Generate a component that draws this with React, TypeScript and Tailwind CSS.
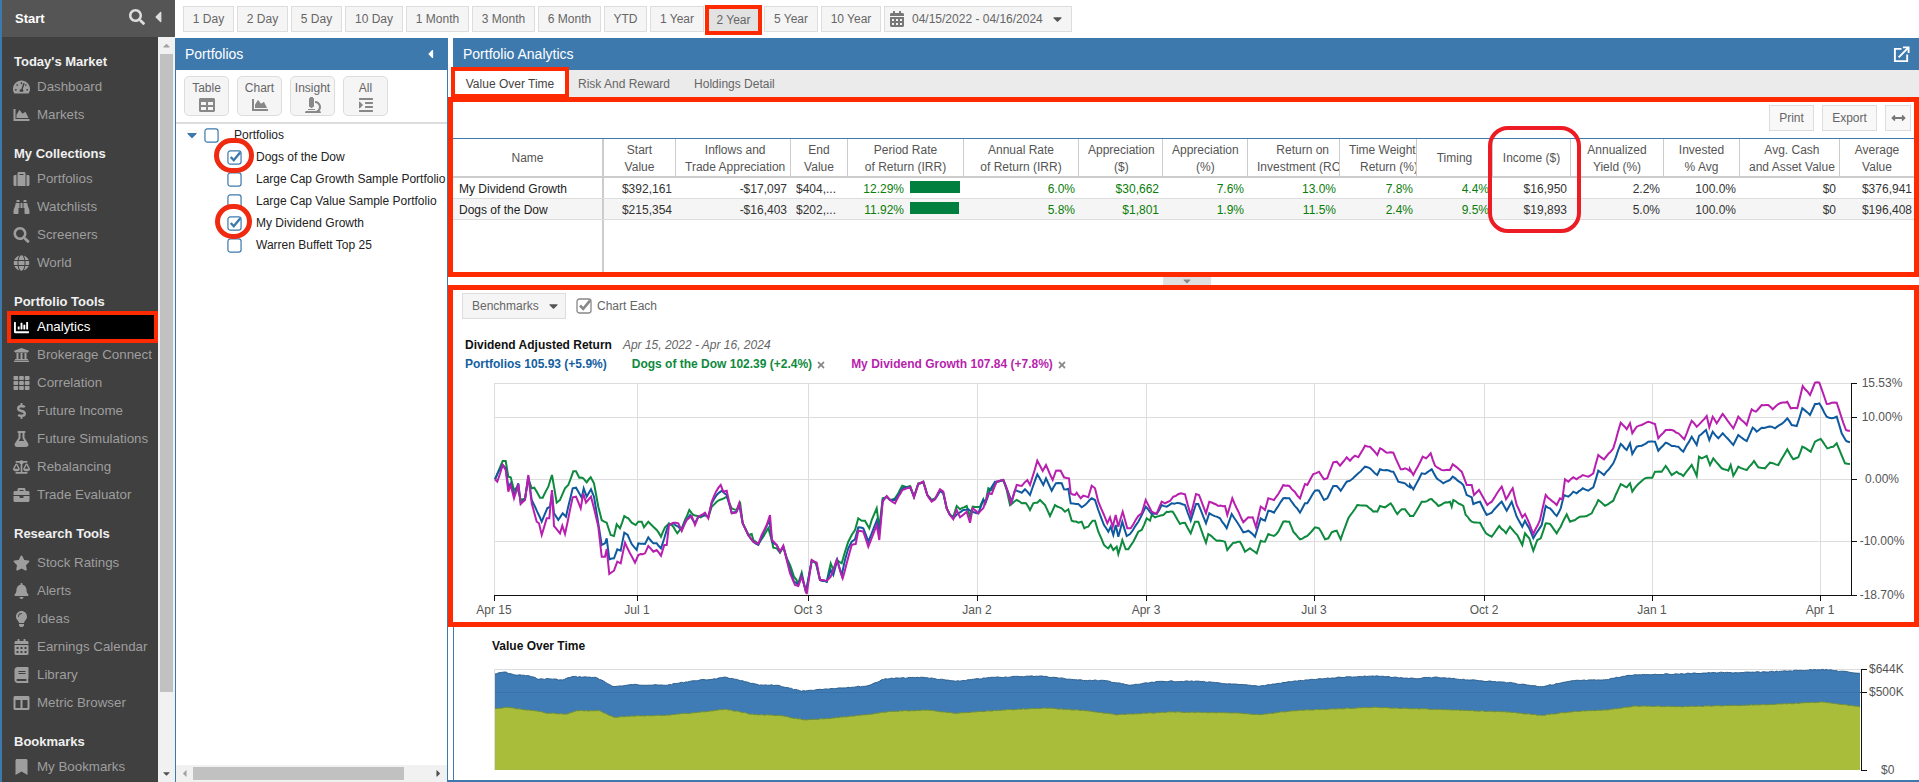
import React from "react";
import {
  FaTachometerAlt, FaChartArea, FaSuitcase, FaBinoculars, FaSearch, FaGlobe, FaChartBar, FaUniversity, FaTh,
  FaDollarSign, FaFlask, FaBalanceScale, FaBriefcase, FaStar, FaBell, FaLightbulb, FaCalendarAlt, FaBook, FaColumns,
  FaBookmark, FaTable, FaMicroscope, FaIndent, FaCaretDown, FaCaretLeft, FaCaretUp, FaCaretRight, FaTimes, FaArrowsAltH,
} from "react-icons/fa";

const BLUE = "#3e79ad";

/* ---------- traced chart data: crop coordinates, 3x ---------- */
const G1 = "15,238 25,215 38,183 47,183 55,230 62,232 72,270 82,262 92,300 105,295 115,235 125,265 133,263 150,293 158,293 175,260 186,225 200,308 210,300 225,265 235,255 250,214 258,214 268,233 280,235 290,247 302,232 312,250 325,320 335,360 350,368 362,405 372,408 380,373 390,385 403,348 415,355 425,368 437,375 445,365 455,365 462,382 475,365 490,380 500,390 513,410 525,382 537,370 550,380 562,400 575,385 585,360 598,330 610,345 622,348 632,352 645,345 655,352 665,320 680,305 695,298 710,290 725,325 740,330 750,305 758,370 775,405 785,402 790,420 805,432 820,410 835,385 845,420 850,443 860,445 870,458 880,440 890,475 900,495 912,530 925,550 935,518 948,578 965,482 978,490 990,540 1010,545 1022,490 1030,510 1040,480 1055,490 1065,455 1075,425 1085,405 1095,390 1105,355 1115,362 1125,362 1138,385 1145,360 1160,325 1168,385 1178,295 1190,290 1200,300 1215,295 1225,280 1237,257 1250,262 1260,258 1272,290 1285,250 1300,245 1312,285 1325,300 1335,295 1350,272 1360,280 1370,325 1380,345";
const B1 = "15,238 25,215 38,195 47,205 55,260 62,250 72,285 85,250 92,310 105,298 115,230 125,300 135,320 155,365 172,325 180,320 186,280 192,340 205,360 218,340 228,350 248,265 258,263 275,293 281,265 290,290 303,268 312,290 325,370 335,435 345,430 350,415 358,478 372,475 382,448 392,452 403,398 413,405 425,432 440,450 445,430 465,432 475,412 490,430 500,430 513,445 523,415 535,375 550,370 565,380 575,390 585,365 600,345 615,370 625,350 645,345 655,350 665,310 680,285 695,272 710,285 725,338 740,335 748,315 758,370 775,405 790,425 805,435 820,400 838,360 846,425 860,435 870,455 880,440 890,475 900,510 912,545 925,555 935,525 948,575 965,482 978,488 990,540 1010,545 1022,510 1030,525 1042,480 1055,525 1065,480 1075,445 1085,425 1095,418 1105,382 1120,385 1135,425 1160,362 1168,400 1178,300 1190,290 1200,300 1215,300 1225,285 1237,265 1260,262 1272,290 1285,252 1300,247 1312,285 1325,302 1335,298 1350,272 1360,280 1370,325 1380,345";
const M1 = "15,238 22,245 38,195 47,210 55,275 62,255 72,295 85,252 92,312 105,300 115,225 125,310 140,365 147,370 155,405 170,355 178,355 186,270 192,378 210,400 217,377 225,402 248,292 258,290 272,325 280,280 288,308 303,290 312,325 325,380 335,470 345,470 350,447 358,522 372,512 382,485 392,490 405,428 420,460 435,488 445,465 465,460 475,438 490,455 500,450 513,467 523,435 530,435 537,375 550,368 565,370 575,393 590,360 605,348 615,375 625,350 645,338 655,355 665,305 678,275 692,255 700,275 710,272 725,340 738,338 748,310 758,370 775,405 790,425 805,432 815,405 830,375 840,345 846,420 860,435 870,455 880,437 890,480 900,520 915,555 925,558 935,530 950,582 965,480 980,488 990,540 1010,542 1022,530 1030,510 1040,480 1058,535 1070,490 1085,435 1097,432 1105,392 1120,395 1135,440 1160,375 1168,420 1178,305 1190,288 1200,300 1215,310 1225,290 1237,270 1262,262 1272,292 1285,252 1300,245 1312,285 1325,305 1335,298 1350,268 1360,275 1370,325 1380,345";
const G2 = "0,345 10,350 20,318 30,328 50,318 60,350 68,320 90,320 100,298 105,315 115,265 125,270 140,245 160,240 170,270 180,315 200,300 215,310 228,310 240,330 250,310 262,308 270,300 285,315 300,348 315,315 335,325 345,335 355,328 365,362 385,368 395,365 403,385 415,380 428,362 435,362 445,395 462,435 475,445 482,435 490,450 500,440 505,462 517,420 527,448 535,448 550,425 565,395 575,390 590,355 600,362 605,345 615,352 640,345 650,335 668,335 690,372 705,368 722,400 735,365 745,365 768,428 775,402 800,422 825,425 832,450 850,428 870,425 885,455 900,445 920,460 932,422 945,425 955,402 972,408 985,395 1000,365 1018,365 1030,395 1050,418 1072,408 1095,382 1107,385 1125,418 1135,415 1145,397 1160,392 1172,418 1195,355 1222,315 1250,317 1270,335 1282,335 1290,318 1305,322 1322,310 1342,342 1355,328 1365,328 1380,347";
const B2 = "0,345 10,355 25,340 40,330 55,328 65,335 85,340 100,300 108,305 120,270 135,245 160,240 172,270 185,305 195,270 215,278 225,268 240,285 262,223 280,255 288,235 305,272 318,250 335,250 342,268 355,266 362,310 385,312 395,322 405,315 425,295 435,300 445,330 462,375 475,395 482,380 490,405 497,375 505,410 517,365 530,408 540,402 565,365 587,320 605,342 620,342 635,315 650,320 665,310 690,310 705,315 722,362 738,312 745,312 768,370 778,340 810,355 830,385 845,342 870,380 880,397 895,392 915,410 932,355 945,362 955,332 972,338 985,318 1000,295 1018,295 1050,338 1065,310 1072,310 1095,272 1107,272 1122,300 1132,295 1150,258 1160,258 1172,272 1190,245 1200,242 1225,220 1245,200 1260,205 1282,225 1290,208 1330,215 1345,245 1365,250 1380,262";
const M2 = "0,345 10,358 20,330 30,352 50,335 60,368 68,325 85,340 100,325 108,300 115,280 125,282 140,245 160,240 172,270 183,310 200,255 215,258 232,240 240,255 262,182 278,213 288,195 308,240 318,212 332,212 342,232 357,235 362,280 375,285 380,278 392,295 400,287 415,292 425,257 435,265 445,305 462,345 472,370 480,352 488,380 497,345 505,380 518,335 532,385 542,385 565,348 575,340 587,300 605,335 620,340 635,305 645,310 660,303 670,290 692,280 705,283 722,345 738,282 747,285 768,340 778,305 805,318 825,318 832,345 847,295 860,325 880,367 895,352 908,352 918,382 932,320 945,330 955,295 972,300 985,282 1000,255 1018,258 1050,295 1065,252 1072,255 1090,222 1107,215 1122,238 1132,235 1150,187 1160,185 1170,197 1190,172 1200,182 1215,167 1225,172 1245,137 1260,140 1282,165 1290,145 1310,158 1330,158 1352,208 1365,205 1380,213";
const G3 = "30,408 40,408 65,365 75,365 95,357 115,378 130,370 150,365 155,380 160,360 190,378 197,405 215,425 240,428 258,460 275,470 298,438 318,460 330,440 352,465 367,495 375,460 388,475 400,512 412,480 422,475 437,430 450,432 470,460 482,440 500,403 510,425 525,420 540,410 560,408 575,400 595,360 615,377 640,362 662,312 680,322 690,310 697,335 715,312 735,295 757,293 765,275 785,275 797,258 815,285 830,275 850,288 875,255 890,288 897,230 905,235 920,228 930,255 940,235 965,265 985,272 992,255 1000,287 1015,260 1040,270 1062,243 1075,262 1095,265 1110,248 1135,255 1162,208 1180,238 1195,232 1207,200 1232,215 1245,185 1262,177 1282,205 1300,200 1310,190 1335,250 1350,252";
const B3 = "30,315 40,328 65,280 75,282 95,268 110,295 130,310 150,300 158,290 190,315 200,345 215,352 220,372 240,365 260,405 275,398 305,365 320,392 335,365 350,410 367,440 375,422 388,445 400,475 425,435 437,378 450,385 470,408 482,385 492,345 505,350 520,335 530,340 548,325 565,332 580,322 595,272 612,285 640,250 662,192 680,210 690,190 697,222 710,200 725,197 745,185 765,185 775,212 797,188 815,198 835,200 850,215 875,170 890,195 897,168 918,150 928,180 938,155 955,175 968,160 985,178 1000,195 1015,165 1040,183 1058,143 1070,155 1085,143 1115,140 1125,145 1145,132 1162,115 1175,135 1190,138 1207,85 1230,105 1245,72 1258,70 1280,110 1295,115 1310,110 1325,160 1338,182 1350,187";
const M3 = "30,268 40,285 68,230 78,235 92,220 105,257 125,270 150,270 158,253 185,275 200,315 215,315 222,345 237,330 262,375 275,365 305,320 318,358 338,325 350,375 367,412 375,402 388,430 400,462 420,420 437,345 450,358 470,375 480,355 487,358 495,298 505,305 520,292 530,298 548,285 565,290 580,280 595,225 612,238 640,205 662,128 680,148 690,130 697,160 710,140 725,135 745,125 765,132 775,175 797,150 815,150 835,160 853,178 875,122 890,140 920,108 928,142 938,110 950,130 968,102 985,125 1000,145 1015,110 1040,135 1055,88 1068,95 1085,75 1105,75 1118,88 1135,72 1162,65 1172,85 1192,85 1208,18 1230,45 1245,8 1258,8 1280,72 1295,68 1310,68 1322,105 1338,150 1350,152";
const AB = "48,222 58,216 68,224 85,228 95,238 105,236 120,240 130,230 155,232 175,260 195,254 230,256 260,242 280,238 295,232 310,242 330,256 350,256 375,274 395,268 425,262 445,258 465,236 505,232 540,244 580,232 630,228 670,240 700,242 725,256 760,244 800,244 830,252 865,258 900,244 950,232 985,228 1030,236 1050,232 1090,240 1130,248 1165,260 1200,242 1230,240 1265,224 1310,222 1350,218 1380,218 1420,214 1465,208 1505,220";
const AG = "48,326 60,322 90,332 105,340 125,342 135,332 160,332 175,352 195,348 230,346 260,338 295,328 325,344 350,346 380,360 410,354 445,344 470,334 510,330 540,340 590,330 635,324 680,332 710,344 770,336 830,338 865,344 900,332 950,326 985,322 1030,326 1070,330 1130,336 1165,346 1200,334 1235,330 1265,318 1310,320 1380,316 1420,312 1465,306 1505,320";

type P = [number, number];
const parse = (s: string, ox: number, oy: number, sx = 3, sy = 3): P[] =>
  s.split(" ").map((t) => {
    const [x, y] = t.split(",").map(Number);
    return [ox + x / sx, oy + y / sy] as P;
  });

function jag(pts: P[], seed: number, amp: number, step: number): P[] {
  let r = seed;
  const out: P[] = [];
  for (let i = 0; i < pts.length - 1; i++) {
    const [x0, y0] = pts[i];
    const [x1, y1] = pts[i + 1];
    const n = Math.max(1, Math.round((x1 - x0) / step));
    for (let k = 0; k < n; k++) {
      r = (r * 9301 + 49297) % 233280;
      const t = k / n;
      out.push([x0 + (x1 - x0) * t, y0 + (y1 - y0) * t + (k === 0 ? 0 : (r / 233280 - 0.5) * amp)]);
    }
  }
  out.push(pts[pts.length - 1]);
  return out;
}
const toD = (p: P[]) => "M" + p.map(([x, y]) => `${x.toFixed(1)} ${y.toFixed(1)}`).join("L");
const line = (a: string, b: string, c: string, seed: number) =>
  toD(jag([...parse(a, 490, 400), ...parse(b, 950, 400), ...parse(c, 1400, 380)], seed, 0.9, 2.4));

const greenD = line(G1, G2, G3, 11);
const blueD = line(B1, B2, B3, 29);
const magD = line(M1, M2, M3, 47);
const areaSX = 1568 / 1469;
const areaBlue = jag(parse(AB, 450, 600, areaSX, 3), 7, 1, 2);
const areaGreen = jag(parse(AG, 450, 600, areaSX, 3), 19, 0.7, 2);

/* ---------- sidebar data ---------- */
type Item = { t: string; I: React.ComponentType<{ className?: string }>; sel?: boolean };
const groups: { h: string; cls: string; items: Item[] }[] = [
  { h: "Today's Market", cls: "mb-0", items: [{ t: "Dashboard", I: FaTachometerAlt }, { t: "Markets", I: FaChartArea }] },
  { h: "My Collections", cls: "mb-0", items: [{ t: "Portfolios", I: FaSuitcase }, { t: "Watchlists", I: FaBinoculars }, { t: "Screeners", I: FaSearch }, { t: "World", I: FaGlobe }] },
  { h: "Portfolio Tools", cls: "mb-0", items: [{ t: "Analytics", I: FaChartBar, sel: true }, { t: "Brokerage Connect", I: FaUniversity }, { t: "Correlation", I: FaTh }, { t: "Future Income", I: FaDollarSign }, { t: "Future Simulations", I: FaFlask }, { t: "Rebalancing", I: FaBalanceScale }, { t: "Trade Evaluator", I: FaBriefcase }] },
  { h: "Research Tools", cls: "mb-[4px]", items: [{ t: "Stock Ratings", I: FaStar }, { t: "Alerts", I: FaBell }, { t: "Ideas", I: FaLightbulb }, { t: "Earnings Calendar", I: FaCalendarAlt }, { t: "Library", I: FaBook }, { t: "Metric Browser", I: FaColumns }] },
  { h: "Bookmarks", cls: "mb-0", items: [{ t: "My Bookmarks", I: FaBookmark }] },
];

const ranges = [
  { t: "1 Day", w: "w-[51px]" }, { t: "2 Day", w: "w-[51px]" }, { t: "5 Day", w: "w-[51px]" }, { t: "10 Day", w: "w-[58px]" },
  { t: "1 Month", w: "w-[63px]" }, { t: "3 Month", w: "w-[63px]" }, { t: "6 Month", w: "w-[63px]" }, { t: "YTD", w: "w-[43px]" },
  { t: "1 Year", w: "w-[54px]" }, { t: "2 Year", w: "w-[57px]", sel: true }, { t: "5 Year", w: "w-[54px]" }, { t: "10 Year", w: "w-[60px]" },
];

/* ---------- table data ---------- */
const COLS = "grid grid-cols-[151px_72px_115px_57px_116px_115px_84px_85px_92px_77px_76px_78px_93px_76px_100px_74px]";
const heads: string[][] = [
  ["Name"], ["Start", "Value"], ["Inflows and", "Trade Appreciation"], ["End", "Value"], ["Period Rate", "of Return (IRR)"],
  ["Annual Rate", "of Return (IRR)"], ["Appreciation", "($)"], ["Appreciation", "(%)"], ["Return on", "Investment (ROI)"],
  ["Time Weighted", "Return (%)"], ["Timing"], ["Income ($)"], ["Annualized", "Yield (%)"], ["Invested", "% Avg"],
  ["Avg. Cash", "and Asset Value"], ["Average", "Value"],
];
const rows = [
  { name: "My Dividend Growth", start: "$392,161", flow: "-$17,097", end: "$404,...", irr: "12.29%", bar: "w-[50px]", ann: "6.0%", ad: "$30,662", ap: "7.6%", roi: "13.0%", tw: "7.8%", tim: "4.4%", inc: "$16,950", y: "2.2%", inv: "100.0%", cash: "$0", avg: "$376,941", bg: "bg-white" },
  { name: "Dogs of the Dow", start: "$215,354", flow: "-$16,403", end: "$202,...", irr: "11.92%", bar: "w-[49px]", ann: "5.8%", ad: "$1,801", ap: "1.9%", roi: "11.5%", tw: "2.4%", tim: "9.5%", inc: "$19,893", y: "5.0%", inv: "100.0%", cash: "$0", avg: "$196,408", bg: "bg-[#f5f5f5]" },
];

function Num({ children, green, last }: { children: React.ReactNode; green?: boolean; last?: boolean }) {
  return (
    <div className={`text-right pt-[2px] overflow-hidden whitespace-nowrap ${last ? "pr-[2px]" : "pr-[4px]"} ${green ? "text-[#0a7d0a]" : "text-[#333]"}`}>{children}</div>
  );
}

function Check({ on, gray, big }: { on?: boolean; gray?: boolean; big?: boolean }) {
  const c = gray ? "#888" : BLUE;
  return (
    <svg viewBox="0 0 16 16" className={`block shrink-0 overflow-visible ${big ? "w-[16px] h-[16px]" : "w-[15px] h-[15px]"}`}>
      <rect x="1" y="1" width="14" height="14" rx="2.5" fill="none" stroke={c} strokeWidth="1.3" />
      {on && <path d="M4 7.5l3.2 3.4L14 2.6" fill="none" stroke={c} strokeWidth="2.6" />}
    </svg>
  );
}

function TBtn({ t, I }: { t: string; I: React.ComponentType<{ className?: string }> }) {
  return (
    <div className="w-[45px] h-[40px] rounded-[5px] border border-[#ddd] bg-[#f5f5f5] flex flex-col items-center pt-[4px] text-[#666] text-[12px] leading-[15px]">
      <span>{t}</span>
      <I className="w-[16px] h-[16px] text-[#888] mt-[1px]" />
    </div>
  );
}

export default function App() {
  return (
    <div className="w-[1919px] h-[782px] overflow-hidden flex bg-white text-[12px] [font-family:'Liberation_Sans',Arial,sans-serif]">
      {/* left navigation */}
      <div className="w-[175px] h-full shrink-0 flex flex-col border-l-2 border-[#3e79ad]">
        <div className="h-[37px] shrink-0 bg-[#555] flex items-center pl-[13px] text-white font-bold text-[13px]">
          <span className="flex-1">Start</span>
          <FaSearch className="w-[16px] h-[16px] text-[#ddd] mr-[8px] -mt-[3px]" />
          <FaCaretLeft className="w-[10px] h-[18px] text-[#ddd] mr-[12px] -mt-[4px]" />
        </div>
        <div className="flex-1 flex min-h-0">
          <div className="w-[156px] bg-[#404040] pt-[13px] overflow-hidden">
            {groups.map((g) => (
              <div key={g.h} className="mb-[13px]">
                <div className={`h-[23px] leading-[24px] pl-[12px] font-bold text-[13px] text-[#f0f0f0] ${g.cls}`}>{g.h}</div>
                {g.items.map((it) =>
                  it.sel ? (
                    <div key={it.t} className="h-[32px] -my-[2px] ml-[5px] border-[4px] border-[#ff2a00] bg-black flex items-center pl-[2px] text-white text-[13.33px]">
                      <it.I className="w-[17px] h-[15px] mr-[7px] shrink-0" />
                      {it.t}
                    </div>
                  ) : (
                    <div key={it.t} className="h-[28px] flex items-center pl-[11px] text-[#9e9e9e] text-[13.33px] whitespace-nowrap">
                      <span className="w-[24px] shrink-0"><it.I className="w-[17px] h-[16px]" /></span>
                      {it.t}
                    </div>
                  )
                )}
              </div>
            ))}
          </div>
          <div className="w-[17px] bg-[#f1f1f1] flex flex-col items-center">
            <div className="h-[17px] shrink-0 flex items-center justify-center"><FaCaretUp className="w-[11px] h-[11px] text-[#a3a3a3]" /></div>
            <div className="w-[13px] h-[638px] shrink-0 bg-[#c1c1c1]" />
            <div className="flex-1" />
            <div className="h-[17px] shrink-0 flex items-center justify-center"><FaCaretDown className="w-[11px] h-[11px] text-[#505050]" /></div>
          </div>
        </div>
      </div>

      <div className="flex-1 min-w-0 flex flex-col">
        {/* date range toolbar */}
        <div className="h-[38px] shrink-0 flex pl-[8px] pt-[6px] gap-[3px] text-[#666]">
          {ranges.map((r) =>
            r.sel ? (
              <div key={r.t} className={`${r.w} h-[30px] -mt-[1px] -ml-[2px] -mr-[1px] border-[4px] border-[#ff2a00] bg-[#e2e2e2] flex items-center justify-center`}>{r.t}</div>
            ) : (
              <div key={r.t} className={`${r.w} h-[26px] border border-[#ddd] bg-[#f5f5f5] flex items-center justify-center`}>{r.t}</div>
            )
          )}
          <div className="w-[188px] h-[26px] border border-[#ddd] bg-[#f5f5f5] flex items-center pl-[5px]">
            <FaCalendarAlt className="w-[14px] h-[16px] text-[#777] mr-[8px]" />
            <span>04/15/2022 - 04/16/2024</span>
            <FaCaretDown className="w-[13px] h-[14px] text-[#555] ml-[8px]" />
          </div>
        </div>

        <div className="flex-1 min-h-0 flex">
          {/* portfolios panel */}
          <div className="relative w-[273px] shrink-0 flex flex-col border-x border-[#3e79ad]">
            <div className="h-[32px] -mx-px shrink-0 bg-[#3e79ad] flex items-center justify-between pl-[10px] pr-[12px] text-white text-[14px]">
              <span>Portfolios</span>
              <FaCaretLeft className="w-[11px] h-[14px]" />
            </div>
            <div className="h-[54px] shrink-0 flex gap-[8px] pl-[8px] pt-[6px] border-b-2 border-[#ddd]">
              <TBtn t="Table" I={FaTable} />
              <TBtn t="Chart" I={FaChartArea} />
              <TBtn t="Insight" I={FaMicroscope} />
              <TBtn t="All" I={FaIndent} />
            </div>
            <div className="flex-1 min-h-0 overflow-hidden text-[#222]">
              <div className="h-[22px] flex items-center pl-[8px]">
                <FaCaretDown className="w-[16px] h-[16px] text-[#3e79ad] mr-[4px]" />
                <Check />
                <span className="ml-[15px]">Portfolios</span>
              </div>
              {[
                { t: "Dogs of the Dow", on: true },
                { t: "Large Cap Growth Sample Portfolio" },
                { t: "Large Cap Value Sample Portfolio" },
                { t: "My Dividend Growth", on: true },
                { t: "Warren Buffett Top 25" },
              ].map((n) => (
                <div key={n.t} className="h-[22px] flex items-center pl-[51px] whitespace-nowrap">
                  <Check on={n.on} />
                  <span className="ml-[14px]">{n.t}</span>
                </div>
              ))}
            </div>
            <div className="h-[17px] shrink-0 bg-[#f1f1f1] flex items-center">
              <div className="w-[17px] flex justify-center"><FaCaretLeft className="w-[11px] h-[11px] text-[#a3a3a3]" /></div>
              <div className="w-[211px] h-[13px] bg-[#c1c1c1]" />
              <div className="flex-1" />
              <div className="w-[17px] flex justify-center"><FaCaretRight className="w-[11px] h-[11px] text-[#505050]" /></div>
            </div>
            <div className="absolute left-[38px] top-[100px] w-[40px] h-[35px] rounded-full border-[5px] border-[#f02a10]" />
            <div className="absolute left-[39px] top-[166px] w-[37px] h-[35px] rounded-full border-[5px] border-[#f02a10]" />
          </div>

          {/* analytics panel */}
          <div className="flex-1 min-w-0 flex flex-col border-b-2 border-[#3e79ad]">
            <div className="h-[32px] shrink-0 ml-[5px] bg-[#3e79ad] flex items-center justify-between pl-[10px] pr-[9px] text-white text-[14px]">
              <span className="pt-[1px]">Portfolio Analytics</span>
              <svg viewBox="0 0 18 18" className="w-[17px] h-[17px]" fill="none" stroke="#fff" strokeWidth="2">
                <path d="M9 3H2v13h13V9" />
                <path d="M6 12L16 2M10.5 1.5H16.5V7.5" />
              </svg>
            </div>
            <div className="h-[27px] shrink-0 ml-[5px] bg-[#ebebeb] flex items-end text-[#666]">
              <div className="relative z-10 -ml-[2px] w-[118px] h-[31px] -mb-[1px] border-[4px] border-[#ff2a00] bg-white flex items-center justify-center pt-[3px] text-[#444]">Value Over Time</div>
              <span className="ml-[9px] mb-[5px] leading-[15px]">Risk And Reward</span>
              <span className="ml-[24px] mb-[5px] leading-[15px]">Holdings Detail</span>
            </div>

            {/* table */}
            <div className="relative h-[180px] shrink-0 border-[5px] border-[#ff2a00] flex flex-col text-[12px]">
              <div className="h-[37px] shrink-0 border-b border-[#3e79ad] flex justify-end items-start gap-[8px] pt-[3px] pr-[3px] text-[#666]">
                <div className="w-[45px] h-[26px] border border-[#ddd] bg-[#f8f8f8] flex items-center justify-center">Print</div>
                <div className="w-[55px] h-[26px] border border-[#ddd] bg-[#f8f8f8] flex items-center justify-center">Export</div>
                <div className="w-[26px] h-[26px] border border-[#ddd] bg-[#f8f8f8] flex items-center justify-center"><FaArrowsAltH className="w-[17px] h-[14px] text-[#777]" /></div>
              </div>
              <div className={`${COLS} h-[39px] shrink-0 border-b-2 border-[#ccc] text-[#555] leading-[17px]`}>
                {heads.map((h, i) => (
                  <div key={i} className={`flex items-center overflow-hidden whitespace-nowrap px-[9px] pt-[2px] border-[#ccc] ${i === 0 ? "border-r-2" : i === 15 ? "" : "border-r"}`}>
                    <div className="min-w-max w-full text-center">
                      {h.map((l) => <div key={l}>{l}</div>)}
                    </div>
                  </div>
                ))}
              </div>
              {rows.map((r) => (
                <div key={r.name} className={`${COLS} h-[21px] shrink-0 border-b border-[#ddd] items-center ${r.bg}`}>
                  <div className="h-full border-r-2 border-[#ccc] pl-[6px] pt-[2px] flex items-center text-[#222] whitespace-nowrap">{r.name}</div>
                  <Num>{r.start}</Num>
                  <Num>{r.flow}</Num>
                  <div className="pl-[5px] pt-[2px] text-[#333] whitespace-nowrap overflow-hidden">{r.end}</div>
                  <div className="flex items-center">
                    <span className="w-[56px] pt-[2px] text-right text-[#0a7d0a] shrink-0">{r.irr}</span>
                    <span className={`${r.bar} h-[12px] ml-[6px] -mt-[3px] bg-[#007f3f] shrink-0`} />
                  </div>
                  <Num green>{r.ann}</Num>
                  <Num green>{r.ad}</Num>
                  <Num green>{r.ap}</Num>
                  <Num green>{r.roi}</Num>
                  <Num green>{r.tw}</Num>
                  <Num green>{r.tim}</Num>
                  <Num>{r.inc}</Num>
                  <Num>{r.y}</Num>
                  <Num>{r.inv}</Num>
                  <Num>{r.cash}</Num>
                  <Num last>{r.avg}</Num>
                </div>
              ))}
              <div className="flex-1 w-[151px] border-r-2 border-[#ccc]" />
              <div className="absolute left-[1035px] top-[24px] w-[93px] h-[107px] rounded-[20px] border-[4px] border-[#ed1c24]" />
            </div>

            {/* splitter */}
            <div className="h-[8px] shrink-0 flex">
              <div className="w-[48px] h-[8px] bg-[#e0e0e0] ml-[715px] flex items-center justify-center">
                <FaCaretDown className="w-[14px] h-[12px] text-[#888]" />
              </div>
            </div>

            {/* return chart */}
            <div className="h-[342px] shrink-0 border-[5px] border-[#ff2a00] flex flex-col">
              <div className="flex items-center pl-[9px] pt-[3px] shrink-0 text-[#666]">
                <div className="w-[104px] h-[26px] border border-[#ddd] bg-[#f5f5f5] flex items-center pl-[9px]">
                  Benchmarks
                  <FaCaretDown className="w-[13px] h-[14px] text-[#555] ml-[8px]" />
                </div>
                <span className="ml-[10px] mr-[5px]"><Check on gray big /></span>
                Chart Each
              </div>
              <div className="mt-[19px] pl-[12px] leading-[15px] shrink-0 whitespace-nowrap">
                <span className="font-bold text-[#111]">Dividend Adjusted Return</span>
                <span className="italic text-[#666] ml-[11px]">Apr 15, 2022 - Apr 16, 2024</span>
              </div>
              <div className="mt-[4px] pl-[12px] leading-[15px] shrink-0 flex items-center font-bold whitespace-nowrap">
                <span className="text-[#14609f]">Portfolios 105.93 (+5.9%)</span>
                <span className="text-[#0e8a3e] ml-[25px]">Dogs of the Dow 102.39 (+2.4%)</span>
                <FaTimes className="w-[10px] h-[10px] text-[#888] ml-[4px]" />
                <span className="text-[#b81fae] ml-[25px]">My Dividend Growth 107.84 (+7.8%)</span>
                <FaTimes className="w-[10px] h-[10px] text-[#888] ml-[4px]" />
              </div>
              <svg viewBox="453 372 1460 250" className="w-[1460px] h-[250px] shrink-0 block text-[12px]">
                {[383.5, 417.5, 479.5, 541.5].map((y) => <line key={y} x1="494" x2="1851" y1={y} y2={y} stroke="#ddd" />)}
                {[494.5, 637.5, 808.5, 977.5, 1146.5, 1314.5, 1484.5, 1652.5, 1820.5].map((x) => <line key={x} x1={x} x2={x} y1="383" y2="595" stroke="#ddd" />)}
                <path d={greenD} fill="none" stroke="#0e8a3e" strokeWidth="2" />
                <path d={blueD} fill="none" stroke="#0f5a9e" strokeWidth="2" />
                <path d={magD} fill="none" stroke="#b81fae" strokeWidth="2" />
                <path d="M494 595.5H1852M1851.5 383V596" fill="none" stroke="#111" />
                {[383.5, 417.5, 479.5, 541.5, 595.5].map((y) => <line key={y} x1="1851" x2="1857" y1={y} y2={y} stroke="#111" />)}
                {[494.5, 637.5, 808.5, 977.5, 1146.5, 1314.5, 1484.5, 1652.5, 1820.5].map((x) => <line key={x} x1={x} x2={x} y1="595" y2="601" stroke="#111" />)}
                {[["15.53%", 387], ["10.00%", 421], ["0.00%", 483], ["-10.00%", 545], ["-18.70%", 599]].map(([t, y]) => (
                  <text key={t} x="1882" y={y} textAnchor="middle" fill="#555">{t}</text>
                ))}
                {[["Apr 15", 494], ["Jul 1", 637], ["Oct 3", 808], ["Jan 2", 977], ["Apr 3", 1146], ["Jul 3", 1314], ["Oct 2", 1484], ["Jan 1", 1652], ["Apr 1", 1820]].map(([t, x]) => (
                  <text key={t} x={x} y="614" textAnchor="middle" fill="#555">{t}</text>
                ))}
              </svg>
            </div>

            {/* value over time */}
            <div className="flex-1 min-h-0 ml-[5px] border-l border-[#3e79ad] flex flex-col">
              <div className="pt-[12px] pl-[38px] leading-[15px] font-bold text-[#111] h-[33px] shrink-0">Value Over Time</div>
              <svg viewBox="454 660 1465 121" className="w-[1465px] h-[121px] shrink-0 block text-[12px]">
                <path d="M494.5 770V669.5H1862" fill="none" stroke="#ddd" />
                <path d={`${toD(areaBlue)}V770H495Z`} fill="#3f7cb6" />
                <path d={toD(areaBlue)} fill="none" stroke="#2c5f8e" />
                <line x1="495" x2="1861" y1="692.5" y2="692.5" stroke="#3872a8" />
                <path d={`${toD(areaGreen)}V770H495Z`} fill="#a9bd3a" />
                <path d={toD(areaGreen)} fill="none" stroke="#6f8f3c" />
                <path d="M1861.5 669V771" fill="none" stroke="#111" />
                {[669.5, 692.5, 770.5].map((y) => <line key={y} x1="1861" x2="1867" y1={y} y2={y} stroke="#111" />)}
                {[["$644K", 673], ["$500K", 696], ["$0", 774]].map(([t, y]) => (
                  <text key={t} x={t === "$0" ? "1881" : "1869"} y={y} fill="#555">{t}</text>
                ))}
              </svg>
            </div>
          </div>
        </div>
      </div>
    </div>
  );
}
